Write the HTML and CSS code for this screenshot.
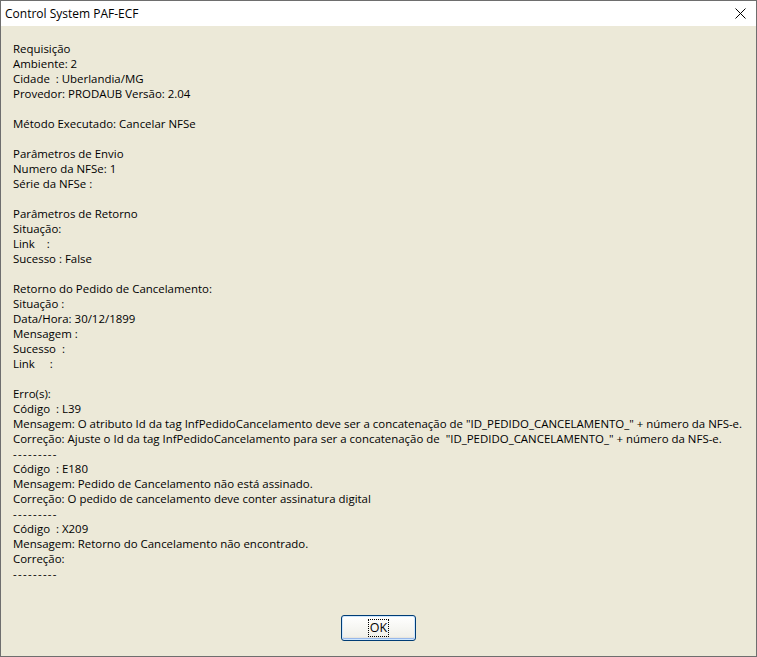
FILE: index.html
```html
<!DOCTYPE html>
<html lang="en">
<head>
	<meta charset="utf-8">
	<title>Control System PAF-ECF</title>
	<link rel="stylesheet" href="styles.css">
</head>
<body>
	<div class="window">
		<!-- Title bar -->
		<div class="titlebar">
			<span class="title">Control System PAF-ECF</span>
			<span class="close">
				<svg width="11" height="11" viewBox="0 0 11 11"><path d="M0.5 0.5 L10.5 10.5 M10.5 0.5 L0.5 10.5" stroke="#000" stroke-width="1" fill="none"/></svg>
			</span>
		</div>

		<!-- Message body -->
		<div class="content">
<pre class="message">Requisição
Ambiente: 2
Cidade  : Uberlandia/MG
Provedor: PRODAUB Versão: 2.04

Método Executado: Cancelar NFSe

Parâmetros de Envio
Numero da NFSe: 1
Série da NFSe :

Parâmetros de Retorno
Situação:
Link    :
Sucesso : False

Retorno do Pedido de Cancelamento:
Situação :
Data/Hora: 30/12/1899
Mensagem :
Sucesso  :
Link     :

Erro(s):
Código  : L39
Mensagem: O atributo Id da tag InfPedidoCancelamento deve ser a concatenação de "ID_PEDIDO_CANCELAMENTO_" + número da NFS-e.
Correção: Ajuste o Id da tag InfPedidoCancelamento para ser a concatenação de  "ID_PEDIDO_CANCELAMENTO_" + número da NFS-e.
<span class="sep">---------</span>
Código  : E180
Mensagem: Pedido de Cancelamento não está assinado.
Correção: O pedido de cancelamento deve conter assinatura digital
<span class="sep">---------</span>
Código  : X209
Mensagem: Retorno do Cancelamento não encontrado.
Correção:
<span class="sep">---------</span></pre>
			<div class="buttons">
				<button class="button"><span class="focus">OK</span></button>
			</div>
		</div>
	</div>
</body>
</html>
```

FILE: styles.css
```css
html, body {
	margin: 0;
	padding: 0;
}

body {
	font-family: "Open Sans", "Noto Sans", Arial, sans-serif;
	font-size: 11.45px;
	color: #000;
	background: #ece9d8;
}

.window {
	width: 757px;
	height: 657px;
	box-sizing: border-box;
	border: 1px solid #6e6e6e;
	display: flex;
	flex-direction: column;
	background: #ece9d8;
}

.titlebar {
	height: 25px;
	background: #fff;
	display: flex;
	align-items: center;
	justify-content: space-between;
	padding: 0 10px 0 4px;
	font-size: 12px;
}

.close {
	display: flex;
	align-items: center;
}

.content {
	flex: 1;
	display: flex;
	flex-direction: column;
	padding: 15px 12px 0 12px;
}

.message {
	margin: 0;
	font-family: inherit;
	font-size: inherit;
	line-height: 15px;
	white-space: pre;
	flex: 1;
}

.sep {
	letter-spacing: 1.3px;
}

.buttons {
	display: flex;
	justify-content: center;
	padding-bottom: 15px;
}

.button {
	width: 75px;
	height: 26px;
	font-family: inherit;
	font-size: 12.5px;
	color: #000;
	border: 1px solid #003c74;
	border-radius: 3px;
	background: linear-gradient(#ffffff, #f0f0ea 85%, #d6d0c5);
	box-shadow: inset 0 0 0 1px #cee7ff, inset 0 -1px 0 1px #98b8ea;
	padding: 0;
	display: flex;
	align-items: center;
	justify-content: center;
}

.focus {
	border: 1px dotted #000;
	padding: 0 1px;
	line-height: 16px;
}
```
